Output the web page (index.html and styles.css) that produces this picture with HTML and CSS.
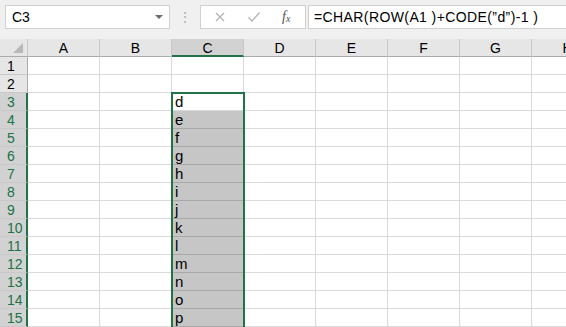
FILE: index.html
```html
<!DOCTYPE html>
<html lang="ja">
<head>
    <meta charset="UTF-8">
    <title>Excel</title>
    <link rel="stylesheet" href="styles.css">
</head>
<body>
    <div class="toolbar">
        <div class="name-box">
            <span class="name-text">C3</span>
            <span class="name-arrow"></span>
        </div>
        <div class="grip">&#8942;</div>
        <div class="fx-box">
            <svg class="fx-icon" width="12" height="12" viewBox="0 0 12 12"><path d="M2 2 L10 10 M10 2 L2 10" stroke="#b4b4b4" stroke-width="1.3" fill="none"/></svg>
            <svg class="fx-icon" width="14" height="12" viewBox="0 0 14 12"><path d="M1.5 6.5 L5 10 L12.5 1.5" stroke="#b4b4b4" stroke-width="1.3" fill="none"/></svg>
            <span class="fx-label">f<sub>x</sub></span>
        </div>
        <div class="formula">=CHAR(ROW(A1 )+CODE(”d”)-1 )</div>
    </div>

    <div class="sheet">
        <div class="grid" id="grid"></div>
        <div class="selection"></div>
    </div>

    <script>
        // 열 머리글과 행을 그린다
        const cols = ['A', 'B', 'C', 'D', 'E', 'F', 'G', 'H'];
        const letters = 'defghijklmnop';
        const grid = document.getElementById('grid');

        function cell(cls, text) {
            const div = document.createElement('div');
            div.className = cls;
            if (text) div.textContent = text;
            grid.appendChild(div);
        }

        cell('corner');
        cols.forEach(c => cell(c === 'C' ? 'col-head active' : 'col-head', c));

        for (let r = 1; r <= 15; r++) {
            cell(r >= 3 ? 'row-head active' : 'row-head', String(r));
            cols.forEach(c => {
                if (c === 'C' && r >= 3) {
                    cell(r === 3 ? 'cell current' : 'cell picked', letters[r - 3]);
                } else {
                    cell('cell');
                }
            });
        }
    </script>
</body>
</html>
```

FILE: styles.css
```css
* {
    margin: 0;
    padding: 0;
    box-sizing: border-box;
}

html {
    overflow: hidden;
}

body {
    width: 566px;
    height: 327px;
    overflow: hidden;
    background-color: #ffffff;
    font-family: 'Liberation Sans', 'Noto Sans CJK JP', sans-serif;
    color: #000;
}

.toolbar {
    height: 39px;
    background-color: #f0f0f0;
    display: flex;
    align-items: flex-start;
    padding: 5px 0 0 5px;
}

.name-box {
    width: 165px;
    height: 24px;
    background-color: white;
    border: 1px solid #d0d0d0;
    display: flex;
    align-items: center;
    justify-content: space-between;
    padding: 0 6px 0 6px;
}

.name-text {
    font-size: 14px;
}

.name-arrow {
    width: 0;
    height: 0;
    border-left: 4px solid transparent;
    border-right: 4px solid transparent;
    border-top: 4px solid #6a6a6a;
}

.grip {
    width: 30px;
    text-align: center;
    color: #b0b0b0;
    font-size: 14px;
    line-height: 24px;
}

.fx-box {
    width: 106px;
    height: 24px;
    background-color: white;
    border: 1px solid #d0d0d0;
    display: flex;
    align-items: center;
    gap: 21px;
    padding-left: 13px;
}

.fx-label {
    font-family: 'Liberation Serif', serif;
    font-style: italic;
    font-size: 14px;
    color: #555;
}

.fx-label sub {
    font-size: 10px;
    vertical-align: -1px;
}

.formula {
    flex: 1;
    height: 24px;
    margin-left: 2px;
    background-color: white;
    border: 1px solid #d0d0d0;
    border-right: none;
    font-size: 14px;
    letter-spacing: 0.4px;
    line-height: 22px;
    padding-left: 5px;
    white-space: nowrap;
}

.sheet {
    position: relative;
}

.grid {
    display: grid;
    grid-template-columns: 28px repeat(8, 72px);
    grid-auto-rows: 18px;
}

.corner {
    background-color: #e6e6e6;
    border-right: 1px solid #c8c8c8;
    border-bottom: 1px solid #ababab;
    position: relative;
}

.corner::after {
    content: '';
    position: absolute;
    right: 4px;
    bottom: 3px;
    border-left: 10px solid transparent;
    border-bottom: 10px solid #b8b8b8;
}

.col-head {
    background-color: #e6e6e6;
    border-right: 1px solid #c8c8c8;
    border-bottom: 1px solid #ababab;
    text-align: center;
    font-size: 14px;
    line-height: 18px;
}

.col-head.active {
    background-color: #d2d2d2;
    border-bottom: 2px solid #217346;
}

.row-head {
    background-color: #e6e6e6;
    border-right: 1px solid #ababab;
    border-bottom: 1px solid #c8c8c8;
    font-size: 14px;
    line-height: 18px;
    padding-left: 7px;
}

.row-head.active {
    background-color: #d2d2d2;
    color: #217346;
    border-right: 2px solid #217346;
}

.cell {
    border-right: 1px solid #dadada;
    border-bottom: 1px solid #dadada;
    font-size: 15px;
    line-height: 17px;
    padding-left: 3px;
}

.cell.picked {
    background-color: #c6c6c6;
    border-bottom-color: #a8a8a8;
}

.selection {
    position: absolute;
    left: 171px;
    top: 53px;
    width: 74px;
    height: 300px;
    border: 2px solid #217346;
    pointer-events: none;
}
```
